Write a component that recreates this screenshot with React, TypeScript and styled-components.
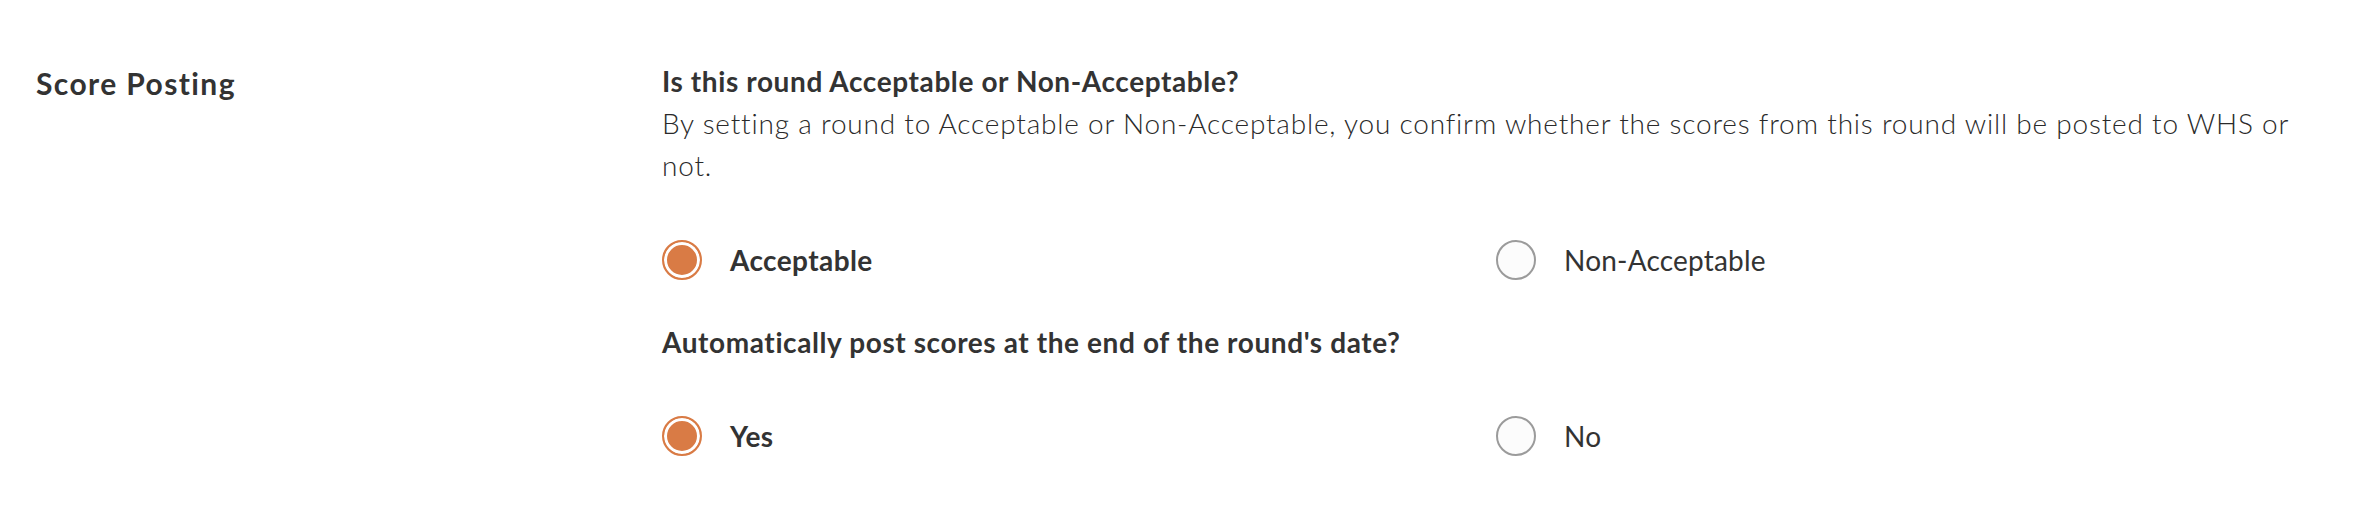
import { FC, useState } from 'react'
import styled, { createGlobalStyle } from 'styled-components'

const GlobalStyle = createGlobalStyle`
  body {
    margin: 0;
    background: #ffffff;
    font-family: Lato, "Open Sans", sans-serif;
    color: #333333;
  }
`

const Section = styled.section`
  display: grid;
  grid-template-columns: 626px 1fr;
  padding: 60px 34px 0 36px;
  height: 522px;
  box-sizing: border-box;
`

const SectionTitle = styled.h2`
  margin: 0;
  font-size: 30px;
  line-height: 46px;
  font-weight: 700;
  letter-spacing: 1.4px;
  color: #333333;
`

const Content = styled.div`
  display: flex;
  flex-direction: column;
`

const Question = styled.h3`
  margin: 0;
  font-size: 28px;
  line-height: 42px;
  font-weight: 700;
  letter-spacing: 0.6px;
  color: #333333;
`

const Description = styled.p`
  margin: 0;
  font-size: 28px;
  line-height: 42px;
  font-weight: 300;
  letter-spacing: 0.8px;
  color: #2a2a2a;
`

const Options = styled.div<{ $top: number; $bottom: number }>`
  display: grid;
  grid-template-columns: 1fr 1fr;
  margin: ${p => p.$top}px 0 ${p => p.$bottom}px;
`

const Option = styled.label<{ $checked: boolean }>`
  display: flex;
  align-items: center;
  gap: 28px;
  height: 42px;
  cursor: pointer;
  font-size: 28px;
  letter-spacing: ${p => (p.$checked ? '0.4px' : '0.2px')};
  font-weight: ${p => (p.$checked ? 700 : 400)};
  color: #333333;
  input {
    display: none;
  }
`

const RadioDot = styled.span<{ $checked: boolean }>`
  width: 40px;
  height: 40px;
  flex: none;
  border-radius: 50%;
  box-sizing: border-box;
  border: 2px solid ${p => (p.$checked ? '#d97b45' : '#9b9b9b')};
  background: ${p => (p.$checked ? '#d97b45' : '#fcfcfc')};
  box-shadow: ${p => (p.$checked ? 'inset 0 0 0 3px #ffffff' : 'none')};
`

type RadioGroupProps = {
  name: string
  options: string[]
  top: number
  bottom: number
}

const RadioGroup: FC<RadioGroupProps> = ({ name, options, top, bottom }) => {
  const [value, setValue] = useState(options[0])
  return (
    <Options $top={top} $bottom={bottom}>
      {options.map(o => (
        <Option key={o} $checked={value === o}>
          <input type="radio" name={name} checked={value === o} onChange={() => setValue(o)} />
          <RadioDot $checked={value === o} />
          <span>{o}</span>
        </Option>
      ))}
    </Options>
  )
}

const App: FC = () => {
  return (
    <>
      <GlobalStyle />
      <Section>
        <SectionTitle>Score Posting</SectionTitle>
        <Content>
          <Question>Is this round Acceptable or Non-Acceptable?</Question>
          <Description>
            By setting a round to Acceptable or Non-Acceptable, you confirm whether the scores from this round will be posted to WHS or not.
          </Description>
          <RadioGroup name="acceptable" options={['Acceptable', 'Non-Acceptable']} top={53} bottom={40} />
          <Question>Automatically post scores at the end of the round's date?</Question>
          <RadioGroup name="autopost" options={['Yes', 'No']} top={52} bottom={0} />
        </Content>
      </Section>
    </>
  )
}

export default App
